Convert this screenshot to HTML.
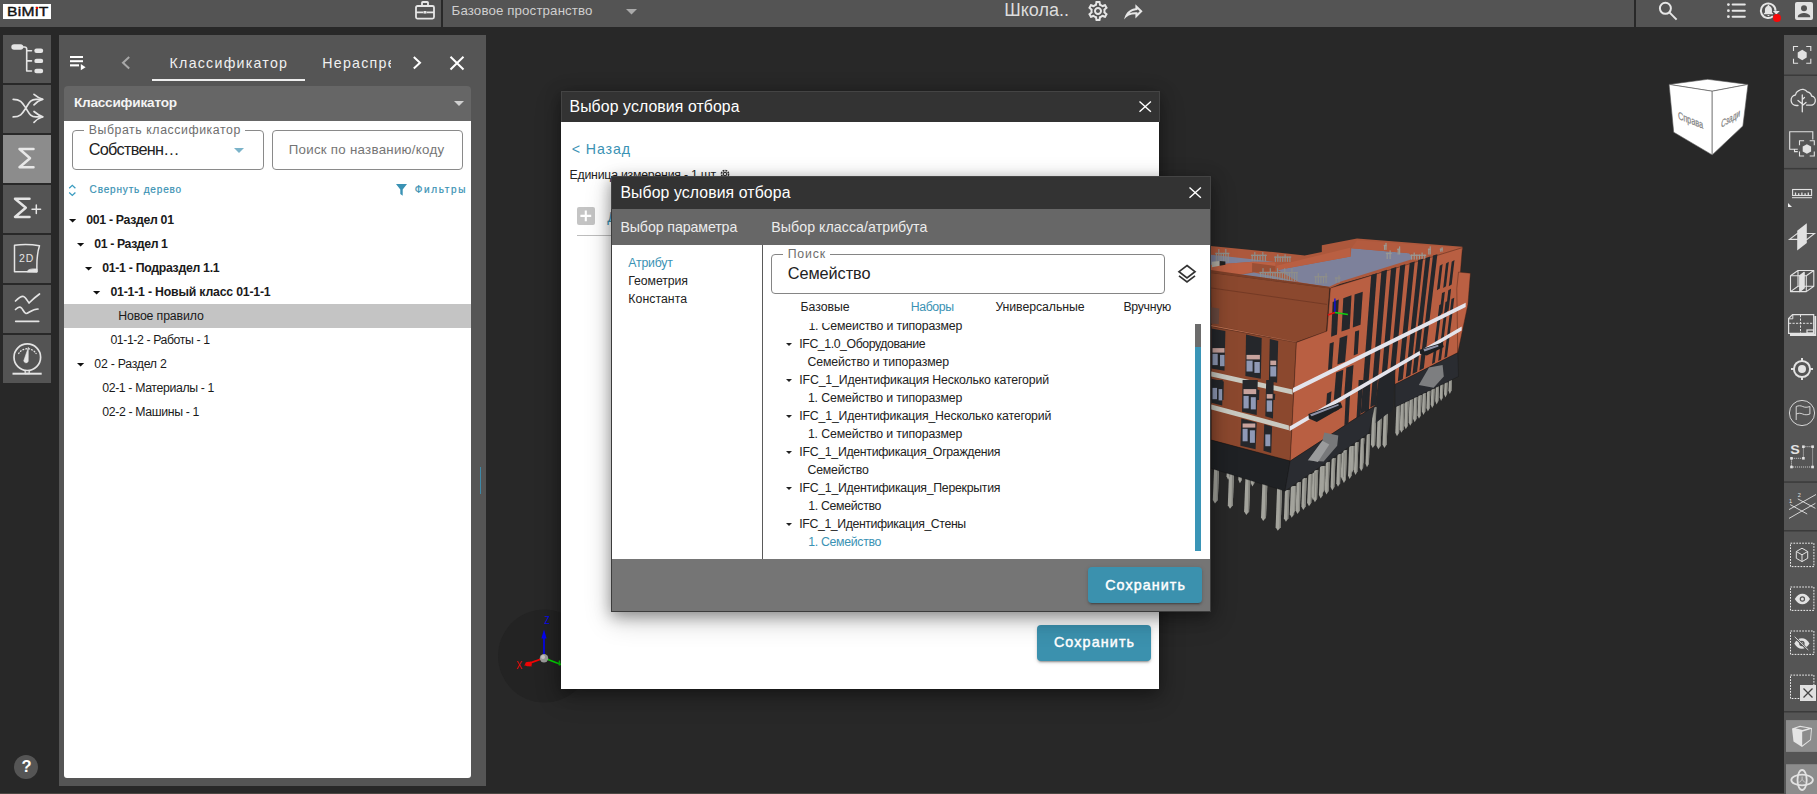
<!DOCTYPE html>
<html lang="ru">
<head>
<meta charset="utf-8">
<title>BIMIT</title>
<style>
*{box-sizing:border-box;margin:0;padding:0}
html,body{width:1817px;height:794px;overflow:hidden;background:#282828;font-family:"Liberation Sans",sans-serif;color:#222}
.abs{position:absolute}
#app{position:relative;width:1817px;height:794px;overflow:hidden;background:#282828}
.t{position:absolute;white-space:nowrap;line-height:1}
svg{position:absolute;overflow:visible}
#top{left:0;top:0;width:1817px;height:27px;background:#545454}
#logo{left:3px;top:4px;width:48px;height:15px;background:#fff}
.lb{position:absolute;left:3px;width:48px;height:48px;background:#545454}
.lb.sel{background:#8c8c8c}
#panel{left:59px;top:35px;width:427px;height:750.700px;background:#555}
#sect{left:64px;top:86px;width:407px;height:35px;background:#666;border-radius:4px 4px 0 0}
#pbody{left:64px;top:120.500px;width:407px;height:657.500px;background:#fff;border-radius:0 0 3px 3px}
.box{position:absolute;border:1px solid #8a8a8a;border-radius:4px;background:#fff}
.rb{position:absolute;left:1784px;width:33px;background:#555}
.mhead{position:absolute;background:#333}
.btn{position:absolute;background:#3b91ae;border-radius:4px;box-shadow:0 3px 1px -2px rgba(0,0,0,.2),0 2px 2px 0 rgba(0,0,0,.14),0 1px 5px 0 rgba(0,0,0,.12)}
</style>
</head>
<body>
<div id="app">
<svg style="left:0;top:0" width="1817" height="794" viewBox="0 0 1817 794">
<circle cx="544.500" cy="656" r="46.500" fill="#232323"/><path d="M544 658V636" stroke="#0404f0" stroke-width="1.700"/><path d="M541.400 638.500L544 629.300 546.600 638.500z" fill="#0404f0"/><path d="M544 658L529 663.300" stroke="#f00404" stroke-width="1.800"/><path d="M530.500 661.300L523.800 665.200 531.700 666.500z" fill="#f00404"/><ellipse cx="528.500" cy="664" rx="3.300" ry="2.300" fill="#f00404"/><path d="M544 658L561 664.500" stroke="#04d804" stroke-width="1.700"/><path d="M559.500 660.500v5" stroke="#04d804" stroke-width="1.600"/><circle cx="544" cy="658.200" r="4.200" fill="#9a9a9a"/><circle cx="543" cy="657" r="2" fill="#c4c4c4"/><text transform="translate(544.600 623.700) scale(0.800 1)" font-family="Liberation Sans, sans-serif" font-size="10.500" fill="#0808f4">Z</text><text transform="translate(516.200 668.700) scale(0.850 1)" font-family="Liberation Sans, sans-serif" font-size="10.500" fill="#f40808">X</text>
<g><path d="M1214.1 468.3h5.0L1217.8 500.1l-2.8 3.500l-2.2-3.500z" fill="#a3a39c"/><path d="M1217.1 468.3h2.0L1217.8 500.1l-1.2 1.500z" fill="#83837d"/><path d="M1229.0 472.9h5.0L1232.8 505.3l-2.8 3.500l-2.2-3.500z" fill="#a3a39c"/><path d="M1232.0 472.9h2.0L1232.8 505.3l-1.2 1.500z" fill="#83837d"/><path d="M1245.4 477.9h5.0L1249.1 511.4l-2.8 3.500l-2.2-3.500z" fill="#a3a39c"/><path d="M1248.4 477.9h2.0L1249.1 511.4l-1.2 1.500z" fill="#83837d"/><path d="M1262.4 483.1h5.0L1266.0 517.5l-2.8 3.500l-2.2-3.500z" fill="#a3a39c"/><path d="M1265.4 483.1h2.0L1266.0 517.5l-1.2 1.500z" fill="#83837d"/><path d="M1277.1 487.6h5.0L1280.6 527.3l-2.8 3.500l-2.2-3.500z" fill="#a3a39c"/><path d="M1280.1 487.6h2.0L1280.6 527.3l-1.2 1.500z" fill="#83837d"/><path d="M1226.8 472.2h3.6L1230.1 476.3l-2.0 3.500l-1.6-3.500z" fill="#a3a39c"/><path d="M1228.9 472.2h1.4L1230.1 476.3l-0.9 1.500z" fill="#83837d"/><path d="M1238.5 475.8h3.6L1241.9 479.7l-2.0 3.500l-1.6-3.500z" fill="#a3a39c"/><path d="M1240.7 475.8h1.4L1241.9 479.7l-0.9 1.500z" fill="#83837d"/><path d="M1251.0 479.6h3.6L1254.4 483.1l-2.0 3.500l-1.6-3.500z" fill="#a3a39c"/><path d="M1253.2 479.6h1.4L1254.4 483.1l-0.9 1.500z" fill="#83837d"/><path d="M1285.0 490.0h4.4L1288.3 518.2l-2.4 3.500l-2.0-3.500z" fill="#a3a39c"/><path d="M1287.7 490.0h1.8L1288.3 518.2l-1.1 1.500z" fill="#83837d"/><path d="M1290.9 486.0h4.3L1294.1 514.3l-2.4 3.500l-1.9-3.500z" fill="#a3a39c"/><path d="M1293.5 486.0h1.7L1294.1 514.3l-1.1 1.500z" fill="#83837d"/><path d="M1296.7 482.0h4.3L1299.8 510.4l-2.3 3.500l-1.9-3.500z" fill="#a3a39c"/><path d="M1299.3 482.0h1.7L1299.8 510.4l-1.1 1.500z" fill="#83837d"/><path d="M1302.5 478.0h4.2L1305.6 506.6l-2.3 3.500l-1.9-3.500z" fill="#a3a39c"/><path d="M1305.0 478.0h1.7L1305.6 506.6l-1.0 1.500z" fill="#83837d"/><path d="M1308.4 474.0h4.1L1311.3 502.7l-2.3 3.500l-1.9-3.500z" fill="#a3a39c"/><path d="M1310.8 474.0h1.6L1311.3 502.7l-1.0 1.500z" fill="#83837d"/><path d="M1314.2 469.9h4.0L1317.1 498.8l-2.2 3.500l-1.8-3.500z" fill="#a3a39c"/><path d="M1316.6 469.9h1.6L1317.1 498.8l-1.0 1.500z" fill="#83837d"/><path d="M1320.0 465.9h4.0L1322.9 494.9l-2.2 3.500l-1.8-3.500z" fill="#a3a39c"/><path d="M1322.4 465.9h1.6L1322.9 494.9l-1.0 1.500z" fill="#83837d"/><path d="M1325.9 461.9h3.9L1328.6 491.0l-2.1 3.500l-1.8-3.500z" fill="#a3a39c"/><path d="M1328.2 461.9h1.6L1328.6 491.0l-1.0 1.500z" fill="#83837d"/><path d="M1331.7 457.9h3.8L1334.4 487.1l-2.1 3.500l-1.7-3.500z" fill="#a3a39c"/><path d="M1334.0 457.9h1.5L1334.4 487.1l-1.0 1.500z" fill="#83837d"/><path d="M1337.5 453.9h3.8L1340.1 483.2l-2.1 3.500l-1.7-3.500z" fill="#a3a39c"/><path d="M1339.8 453.9h1.5L1340.1 483.2l-0.9 1.500z" fill="#83837d"/><path d="M1343.3 449.9h3.7L1345.9 479.4l-2.0 3.500l-1.7-3.500z" fill="#a3a39c"/><path d="M1345.6 449.9h1.5L1345.9 479.4l-0.9 1.500z" fill="#83837d"/><path d="M1349.2 445.9h3.6L1351.6 475.5l-2.0 3.500l-1.6-3.500z" fill="#a3a39c"/><path d="M1351.3 445.9h1.4L1351.6 475.5l-0.9 1.500z" fill="#83837d"/><path d="M1355.0 441.9h3.5L1357.4 471.6l-1.9 3.500l-1.6-3.500z" fill="#a3a39c"/><path d="M1357.1 441.9h1.4L1357.4 471.6l-0.9 1.500z" fill="#83837d"/><path d="M1360.8 437.9h3.5L1363.1 467.7l-1.9 3.500l-1.6-3.500z" fill="#a3a39c"/><path d="M1362.9 437.9h1.4L1363.1 467.7l-0.9 1.500z" fill="#83837d"/><path d="M1366.7 433.9h3.4L1368.9 463.8l-1.9 3.500l-1.5-3.500z" fill="#a3a39c"/><path d="M1368.7 433.9h1.4L1368.9 463.8l-0.9 1.500z" fill="#83837d"/><path d="M1293.2 486.1h3.0L1295.2 510.3l-1.7 3.500l-1.4-3.500z" fill="#a3a39c"/><path d="M1295.0 486.1h1.2L1295.2 510.3l-0.8 1.500z" fill="#83837d"/><path d="M1302.9 479.4h3.0L1305.0 503.5l-1.7 3.500l-1.4-3.500z" fill="#a3a39c"/><path d="M1304.7 479.4h1.2L1305.0 503.5l-0.8 1.500z" fill="#83837d"/><path d="M1312.6 472.7h3.0L1314.7 496.7l-1.7 3.500l-1.4-3.500z" fill="#a3a39c"/><path d="M1314.4 472.7h1.2L1314.7 496.7l-0.8 1.500z" fill="#83837d"/><path d="M1322.4 466.1h3.0L1324.4 489.9l-1.7 3.500l-1.4-3.500z" fill="#a3a39c"/><path d="M1324.2 466.1h1.2L1324.4 489.9l-0.8 1.500z" fill="#83837d"/><path d="M1332.1 459.4h3.0L1334.1 483.1l-1.7 3.500l-1.4-3.500z" fill="#a3a39c"/><path d="M1333.9 459.4h1.2L1334.1 483.1l-0.8 1.500z" fill="#83837d"/><path d="M1341.8 452.7h3.0L1343.8 476.3l-1.7 3.500l-1.4-3.500z" fill="#a3a39c"/><path d="M1343.6 452.7h1.2L1343.8 476.3l-0.8 1.500z" fill="#83837d"/><path d="M1351.5 446.0h3.0L1353.6 469.5l-1.7 3.500l-1.4-3.500z" fill="#a3a39c"/><path d="M1353.3 446.0h1.2L1353.6 469.5l-0.8 1.500z" fill="#83837d"/><path d="M1361.2 439.3h3.0L1363.3 462.7l-1.7 3.500l-1.4-3.500z" fill="#a3a39c"/><path d="M1363.0 439.3h1.2L1363.3 462.7l-0.8 1.500z" fill="#83837d"/><path d="M1372.3 407.2h4.2L1375.1 444.5l-2.3 3.500l-1.9-3.500z" fill="#a3a39c"/><path d="M1374.9 407.2h1.7L1375.1 444.5l-1.1 1.500z" fill="#83837d"/><path d="M1378.0 404.9h4.2L1380.7 445.7l-2.3 3.500l-1.9-3.500z" fill="#a3a39c"/><path d="M1380.5 404.9h1.7L1380.7 445.7l-1.1 1.500z" fill="#83837d"/><path d="M1384.1 402.7h4.2L1386.7 444.5l-2.3 3.500l-1.9-3.500z" fill="#a3a39c"/><path d="M1386.6 402.7h1.7L1386.7 444.5l-1.1 1.500z" fill="#83837d"/><path d="M1396.4 405.5h3.8L1399.1 432.7l-2.1 3.500l-1.7-3.500z" fill="#a3a39c"/><path d="M1398.7 405.5h1.5L1399.1 432.7l-0.9 1.500z" fill="#83837d"/><path d="M1400.8 403.4h3.7L1403.5 429.2l-2.1 3.500l-1.7-3.500z" fill="#a3a39c"/><path d="M1403.0 403.4h1.5L1403.5 429.2l-0.9 1.500z" fill="#83837d"/><path d="M1405.1 401.3h3.7L1407.8 425.7l-2.0 3.500l-1.6-3.500z" fill="#a3a39c"/><path d="M1407.3 401.3h1.5L1407.8 425.7l-0.9 1.500z" fill="#83837d"/><path d="M1409.5 399.2h3.6L1412.2 422.2l-2.0 3.500l-1.6-3.500z" fill="#a3a39c"/><path d="M1411.7 399.2h1.4L1412.2 422.2l-0.9 1.500z" fill="#83837d"/><path d="M1413.9 397.1h3.5L1416.6 418.7l-1.9 3.500l-1.6-3.500z" fill="#a3a39c"/><path d="M1416.0 397.1h1.4L1416.6 418.7l-0.9 1.500z" fill="#83837d"/><path d="M1418.3 395.0h3.5L1420.9 415.2l-1.9 3.500l-1.6-3.500z" fill="#a3a39c"/><path d="M1420.4 395.0h1.4L1420.9 415.2l-0.9 1.500z" fill="#83837d"/><path d="M1422.7 392.9h3.4L1425.3 411.6l-1.9 3.500l-1.5-3.500z" fill="#a3a39c"/><path d="M1424.7 392.9h1.4L1425.3 411.6l-0.8 1.500z" fill="#83837d"/><path d="M1427.1 390.8h3.3L1429.7 408.1l-1.8 3.500l-1.5-3.500z" fill="#a3a39c"/><path d="M1429.1 390.8h1.3L1429.7 408.1l-0.8 1.500z" fill="#83837d"/><path d="M1431.4 388.7h3.3L1434.0 404.6l-1.8 3.500l-1.5-3.500z" fill="#a3a39c"/><path d="M1433.4 388.7h1.3L1434.0 404.6l-0.8 1.500z" fill="#83837d"/><path d="M1435.8 386.6h3.2L1438.4 401.1l-1.8 3.500l-1.4-3.500z" fill="#a3a39c"/><path d="M1437.7 386.6h1.3L1438.4 401.1l-0.8 1.500z" fill="#83837d"/><path d="M1440.2 384.5h3.1L1442.8 397.6l-1.7 3.500l-1.4-3.500z" fill="#a3a39c"/><path d="M1442.1 384.5h1.3L1442.8 397.6l-0.8 1.500z" fill="#83837d"/><path d="M1444.6 382.4h3.1L1447.1 394.1l-1.7 3.500l-1.4-3.500z" fill="#a3a39c"/><path d="M1446.4 382.4h1.2L1447.1 394.1l-0.8 1.500z" fill="#83837d"/><path d="M1449.0 380.3h3.0L1451.5 390.6l-1.7 3.500l-1.4-3.500z" fill="#a3a39c"/><path d="M1450.8 380.3h1.2L1451.5 390.6l-0.8 1.500z" fill="#83837d"/></g>
<g><polygon points="1210.7,246.0 1273.0,252.0 1304.8,255.4 1321.8,252.0 1321.8,245.2 1357.0,238.4 1462.4,246.8 1462.4,249.4 1340.0,284.0 1329.7,288.5 1210.7,272.6" fill="#ad583c"/>
<polygon points="1210.7,254.7 1232.2,257.0 1274.2,261.7 1252.6,261.7 1210.7,264.9" fill="#7d819b"/>
<polygon points="1210.7,264.9 1252.6,261.7 1275.3,262.4 1275.3,266.4 1239.0,274.9 1210.7,270.4" fill="#bb6043"/>
<polygon points="1252.1,263.0 1275.3,266.0 1275.3,270.4 1252.1,272.6" fill="#9a4f35"/>
<polygon points="1239.0,274.9 1253.8,272.4 1275.3,276.6 1299.1,282.3 1268.5,278.3" fill="#7d819b"/>
<polygon points="1277.6,270.1 1350.7,256.5 1351.3,248.2 1409.2,253.3 1412.6,259.0 1340.0,281.7 1328.6,287.1 1299.1,282.3" fill="#7d819b"/>
<polygon points="1276.4,265.8 1350.1,247.7 1350.7,256.5 1277.6,270.1" fill="#b95f42"/>
<polygon points="1357.0,240.3 1460.2,247.7 1437.5,255.0 1409.2,253.3 1351.3,248.2" fill="#b35b3f"/>
<rect x="1215.2" y="252.8" width="14.2" height="1.300" fill="#8e8e8a"/><rect x="1215.8" y="252.8" width="1.200" height="9.6" fill="#8e8e8a"/><rect x="1218.2" y="249.0" width="1.200" height="13.5" fill="#8e8e8a"/><rect x="1220.5" y="252.8" width="1.200" height="9.6" fill="#8e8e8a"/><rect x="1222.9" y="252.8" width="1.200" height="9.6" fill="#8e8e8a"/><rect x="1225.2" y="249.0" width="1.200" height="13.5" fill="#8e8e8a"/><rect x="1227.6" y="252.8" width="1.200" height="9.6" fill="#8e8e8a"/>
<rect x="1250.9" y="254.7" width="15.9" height="1.300" fill="#8e8e8a"/><rect x="1251.6" y="254.7" width="1.200" height="6.6" fill="#8e8e8a"/><rect x="1254.2" y="252.1" width="1.200" height="9.2" fill="#8e8e8a"/><rect x="1256.9" y="254.7" width="1.200" height="6.6" fill="#8e8e8a"/><rect x="1259.5" y="254.7" width="1.200" height="6.6" fill="#8e8e8a"/><rect x="1262.2" y="252.1" width="1.200" height="9.2" fill="#8e8e8a"/><rect x="1264.8" y="254.7" width="1.200" height="6.6" fill="#8e8e8a"/>
<rect x="1274.2" y="256.5" width="17.0" height="1.300" fill="#8e8e8a"/><rect x="1274.8" y="256.5" width="1.200" height="5.4" fill="#8e8e8a"/><rect x="1277.2" y="254.3" width="1.200" height="7.5" fill="#8e8e8a"/><rect x="1279.6" y="256.5" width="1.200" height="5.4" fill="#8e8e8a"/><rect x="1282.1" y="256.5" width="1.200" height="5.4" fill="#8e8e8a"/><rect x="1284.5" y="254.3" width="1.200" height="7.5" fill="#8e8e8a"/><rect x="1286.9" y="256.5" width="1.200" height="5.4" fill="#8e8e8a"/><rect x="1289.3" y="256.5" width="1.200" height="5.4" fill="#8e8e8a"/>
<rect x="1259.4" y="271.9" width="38.5" height="1.300" fill="#8e8e8a"/><rect x="1260.0" y="271.9" width="1.200" height="9.3" fill="#8e8e8a"/><rect x="1262.4" y="268.2" width="1.200" height="12.9" fill="#8e8e8a"/><rect x="1264.8" y="271.9" width="1.200" height="9.3" fill="#8e8e8a"/><rect x="1267.3" y="271.9" width="1.200" height="9.3" fill="#8e8e8a"/><rect x="1269.7" y="268.2" width="1.200" height="12.9" fill="#8e8e8a"/><rect x="1272.1" y="271.9" width="1.200" height="9.3" fill="#8e8e8a"/><rect x="1274.5" y="271.9" width="1.200" height="9.3" fill="#8e8e8a"/><rect x="1276.9" y="268.2" width="1.200" height="12.9" fill="#8e8e8a"/><rect x="1279.3" y="271.9" width="1.200" height="9.3" fill="#8e8e8a"/><rect x="1281.7" y="271.9" width="1.200" height="9.3" fill="#8e8e8a"/><rect x="1284.1" y="268.2" width="1.200" height="12.9" fill="#8e8e8a"/><rect x="1286.5" y="271.9" width="1.200" height="9.3" fill="#8e8e8a"/><rect x="1288.9" y="271.9" width="1.200" height="9.3" fill="#8e8e8a"/><rect x="1291.3" y="268.2" width="1.200" height="12.9" fill="#8e8e8a"/><rect x="1293.8" y="271.9" width="1.200" height="9.3" fill="#8e8e8a"/><rect x="1296.2" y="271.9" width="1.200" height="9.3" fill="#8e8e8a"/>
<rect x="1314.4" y="276.1" width="13.0" height="1.300" fill="#8e8e8a"/><rect x="1315.1" y="276.1" width="1.200" height="7.3" fill="#8e8e8a"/><rect x="1317.7" y="273.2" width="1.200" height="10.2" fill="#8e8e8a"/><rect x="1320.3" y="276.1" width="1.200" height="7.3" fill="#8e8e8a"/><rect x="1322.9" y="276.1" width="1.200" height="7.3" fill="#8e8e8a"/><rect x="1325.5" y="273.2" width="1.200" height="10.2" fill="#8e8e8a"/>
<rect x="1334.8" y="277.4" width="5.7" height="1.300" fill="#8e8e8a"/><rect x="1335.5" y="277.4" width="1.200" height="5.4" fill="#8e8e8a"/><rect x="1338.4" y="275.3" width="1.200" height="7.5" fill="#8e8e8a"/>
<polygon points="1211.8,261.8 1219.7,261.1 1219.7,265.8 1211.8,267.2" fill="#b4b0a6"/>
<polygon points="1219.7,261.1 1225.4,261.5 1225.4,264.7 1219.7,265.8" fill="#222"/>
<rect x="1383.7" y="244.9" width="2.8" height="1.300" fill="#9a9a94"/><rect x="1384.0" y="244.9" width="1.200" height="5.0" fill="#9a9a94"/><rect x="1385.4" y="242.9" width="1.200" height="7.0" fill="#9a9a94"/>
<rect x="1385.9" y="252.8" width="5.7" height="1.300" fill="#9a9a94"/><rect x="1386.6" y="252.8" width="1.200" height="6.2" fill="#9a9a94"/><rect x="1389.5" y="250.4" width="1.200" height="8.6" fill="#9a9a94"/>
<rect x="1397.3" y="248.7" width="2.8" height="1.300" fill="#9a9a94"/><rect x="1397.6" y="248.7" width="1.200" height="5.8" fill="#9a9a94"/><rect x="1399.0" y="246.4" width="1.200" height="8.1" fill="#9a9a94"/>
<rect x="1410.3" y="254.6" width="15.9" height="1.300" fill="#9a9a94"/><rect x="1411.0" y="254.6" width="1.200" height="5.0" fill="#9a9a94"/><rect x="1413.6" y="252.6" width="1.200" height="7.0" fill="#9a9a94"/><rect x="1416.2" y="254.6" width="1.200" height="5.0" fill="#9a9a94"/><rect x="1418.9" y="254.6" width="1.200" height="5.0" fill="#9a9a94"/><rect x="1421.5" y="252.6" width="1.200" height="7.0" fill="#9a9a94"/><rect x="1424.2" y="254.6" width="1.200" height="5.0" fill="#9a9a94"/>
<rect x="1427.9" y="248.7" width="2.8" height="1.300" fill="#9a9a94"/><rect x="1428.2" y="248.7" width="1.200" height="5.8" fill="#9a9a94"/><rect x="1429.6" y="246.4" width="1.200" height="8.1" fill="#9a9a94"/>
<rect x="1439.8" y="248.6" width="2.8" height="1.300" fill="#9a9a94"/><rect x="1440.1" y="248.6" width="1.200" height="3.1" fill="#9a9a94"/><rect x="1441.5" y="247.3" width="1.200" height="4.3" fill="#9a9a94"/>
<polygon points="1210.7,272.6 1329.7,287.9 1326.3,331.6 1296.4,342.2 1211.3,325.2" fill="#8b482e" stroke="#3c1d12" stroke-width="0.4"/>
<path d="M1210.7 287.9L1326.9 304.4" stroke="#5e2d1c" stroke-width="0.5" fill="none"/>
<polygon points="1210.7,270.1 1329.1,286.8 1329.7,288.5 1210.7,272.8" fill="#7c3f28"/>
<polygon points="1211.3,325.0 1296.4,341.8 1296.4,342.9 1211.3,326.8" fill="#c07050"/>
<polygon points="1211.3,326.6 1296.4,342.4 1290.2,461.0 1211.3,440.1" fill="#8b482e" stroke="#3c1d12" stroke-width="0.4"/>
<polygon points="1330.4,288.0 1462.4,247.7 1460.2,274.9 1457.8,352.7 1395.0,384.4 1395.0,369.7 1379.1,376.5 1374.6,406.1 1290.2,461.0 1296.4,342.4 1327.0,331.1" fill="#b95f42" stroke="#3c1d12" stroke-width="0.4"/>
<polygon points="1458.5,272.1 1470.4,273.2 1467.9,304.4 1457.8,352.7 1456.8,288.5" fill="#bb6043" stroke="#3c1d12" stroke-width="0.4"/>
<polygon points="1371.2,274.9 1376.9,273.2 1366.4,410.8 1360.7,413.7" fill="#25272b"/>
<polygon points="1381.4,271.5 1387.0,269.8 1375.9,404.6 1370.3,407.4" fill="#25272b"/>
<polygon points="1391.0,268.7 1396.4,267.1 1383.1,417.6 1377.7,420.3" fill="#25272b"/>
<polygon points="1400.1,265.8 1405.3,264.2 1391.4,411.7 1386.2,414.3" fill="#25272b"/>
<polygon points="1409.7,263.0 1414.7,261.5 1402.8,379.0 1397.8,381.5" fill="#25272b"/>
<polygon points="1418.2,260.1 1423.0,258.7 1410.5,375.1 1405.7,377.5" fill="#25272b"/>
<polygon points="1425.6,257.9 1430.2,256.5 1417.1,371.7 1412.5,374.0" fill="#25272b"/>
<polygon points="1433.0,255.6 1437.4,254.3 1423.8,368.3 1419.4,370.5" fill="#25272b"/>
<polygon points="1439.3,305.0 1442.2,303.7 1434.9,362.6 1432.0,364.1" fill="#25272b"/>
<polygon points="1445.5,302.0 1448.4,300.7 1441.1,359.5 1438.2,360.9" fill="#25272b"/>
<polygon points="1451.5,299.0 1454.3,297.7 1447.1,356.5 1444.3,357.9" fill="#25272b"/>
<polygon points="1332.7,302.1 1338.8,299.4 1337.0,334.5 1331.1,336.8" fill="#25272b"/>
<polygon points="1343.3,298.2 1351.5,295.3 1349.7,328.8 1341.5,331.6" fill="#25272b"/>
<polygon points="1354.6,294.4 1362.8,291.7 1360.5,324.8 1352.8,327.5" fill="#25272b"/>
<polygon points="1329.7,343.6 1333.8,342.0 1332.0,368.5 1328.1,370.1" fill="#25272b"/>
<polygon points="1339.7,337.9 1347.4,335.2 1345.1,361.7 1337.4,364.4" fill="#25272b"/>
<polygon points="1355.1,331.6 1359.2,330.2 1357.8,353.8 1353.7,355.4" fill="#25272b"/>
<polygon points="1439.8,265.8 1442.6,264.1 1439.8,288.5 1436.9,290.2" fill="#25272b"/>
<polygon points="1446.0,263.5 1448.8,261.8 1446.0,286.2 1443.2,287.9" fill="#25272b"/>
<polygon points="1451.7,261.8 1454.5,260.1 1451.7,284.5 1448.8,286.2" fill="#25272b"/>
<polygon points="1442.0,293.0 1444.9,291.7 1442.4,313.2 1439.5,314.6" fill="#25272b"/>
<polygon points="1448.3,290.2 1451.1,288.8 1448.6,310.4 1445.8,311.7" fill="#25272b"/>
<polygon points="1336.1,372.4 1343.3,369.7 1341.0,397.3 1333.8,400.0" fill="#25272b"/>
<polygon points="1346.3,367.8 1353.5,365.1 1351.5,392.8 1344.2,395.5" fill="#25272b"/>
<polygon points="1327.0,393.6 1331.5,391.3 1329.7,414.0 1325.4,416.3" fill="#25272b"/>
<polygon points="1336.1,389.1 1340.1,387.3 1338.8,409.5 1334.7,411.7" fill="#25272b"/>
<polygon points="1346.3,383.4 1350.8,381.1 1348.5,423.1 1344.4,425.4" fill="#25272b"/>
<polygon points="1358.7,380.0 1363.3,380.0 1360.5,416.3 1356.5,418.5" fill="#25272b"/>
<polygon points="1366.7,380.0 1370.5,380.0 1368.9,411.7 1365.1,414.0" fill="#25272b"/>
<polygon points="1379.1,376.5 1395.0,369.7 1392.7,409.5 1375.7,423.1" fill="#24262a"/>
<polygon points="1211.3,440.1 1290.2,461.0 1285.0,491.1 1211.3,468.4" fill="#1f2124" stroke="#111" stroke-width="0.3"/>
<polygon points="1290.2,461.0 1374.6,406.1 1368.9,433.3 1285.0,491.1" fill="#2a2c31" stroke="#111" stroke-width="0.3"/>
<polygon points="1395.0,384.4 1457.8,352.7 1458.5,376.5 1395.0,407.2" fill="#2a2c31" stroke="#111" stroke-width="0.3"/>
<polygon points="1293.0,388.1 1465.7,302.8 1465.7,307.0 1293.0,392.7" fill="#e4e4ec"/>
<polygon points="1289.6,426.5 1461.7,326.6 1461.7,330.4 1289.6,430.9" fill="#e4e4ec"/>
<polygon points="1308.4,414.0 1340.6,402.2 1342.4,407.2 1316.8,422.0 1308.8,418.5" fill="#1e2023"/>
<polygon points="1310.0,414.5 1338.3,404.0 1338.8,405.4 1311.6,416.3" fill="#8f93a8"/>
<polygon points="1419.5,349.7 1442.6,342.4 1443.8,347.0 1426.8,355.6 1420.0,353.8" fill="#1e2023"/>
<polygon points="1423.4,349.3 1438.1,344.7 1438.5,346.5 1424.5,351.5" fill="#8f93a8"/>
<polygon points="1324.3,432.6 1338.3,435.6 1337.2,445.8 1323.6,461.6 1307.7,460.5 1322.4,440.8" fill="#77787a"/>
<polygon points="1322.4,440.8 1329.3,444.6 1317.9,462.1 1308.4,459.8" fill="#9a9b9c"/>
<polygon points="1429.0,367.4 1442.6,365.1 1443.8,376.5 1433.6,387.8 1418.8,385.1" fill="#7d7e80"/>
<polygon points="1211.3,371.5 1292.5,389.6 1292.5,394.6 1211.3,376.5" fill="#c9c9c0"/>
<polygon points="1211.3,404.5 1288.9,425.4 1288.9,430.3 1211.3,409.5" fill="#c9c9c0"/>
<polygon points="1211.3,328.4 1225.4,331.1 1224.5,370.8 1211.3,368.5" fill="#25272b"/>
<polygon points="1246.0,334.5 1261.7,337.9 1260.8,378.7 1245.4,376.0" fill="#25272b"/>
<polygon points="1269.8,339.0 1278.2,340.9 1277.1,382.8 1268.9,381.0" fill="#25272b"/>
<polygon points="1211.3,378.7 1223.8,381.5 1223.4,400.0 1211.3,400.0" fill="#25272b"/>
<polygon points="1244.2,386.7 1259.4,390.1 1259.0,400.0 1243.8,400.0" fill="#25272b"/>
<polygon points="1267.6,392.3 1275.3,394.1 1274.8,400.0 1267.1,400.0" fill="#25272b"/>
<polygon points="1211.3,380.0 1222.7,380.0 1222.2,405.4 1211.3,402.7" fill="#25272b"/>
<polygon points="1242.6,380.0 1257.8,380.0 1256.7,415.1 1242.0,411.7" fill="#25272b"/>
<polygon points="1266.2,380.0 1273.7,380.0 1273.0,418.5 1265.3,416.3" fill="#25272b"/>
<polygon points="1241.3,418.5 1256.7,422.6 1255.6,449.2 1240.4,445.8" fill="#25272b"/>
<polygon points="1264.2,424.2 1272.1,426.5 1271.2,453.0 1263.5,450.7" fill="#25272b"/>
<rect x="1212.5" y="353.8" width="5.2" height="11.3" fill="#8f99b5"/>
<rect x="1220.0" y="354.9" width="4.5" height="11.3" fill="#8f99b5"/>
<rect x="1246.5" y="360.6" width="6.1" height="10.9" fill="#8f99b5"/>
<rect x="1254.4" y="362.0" width="5.4" height="10.9" fill="#8f99b5"/>
<rect x="1270.3" y="366.3" width="5.9" height="10.2" fill="#8f99b5"/>
<rect x="1212.5" y="348.1" width="12.0" height="4.5" fill="#c8a39d"/>
<rect x="1246.5" y="354.9" width="13.4" height="4.5" fill="#c8a39d"/>
<rect x="1270.3" y="360.6" width="5.9" height="4.5" fill="#c8a39d"/>
<rect x="1212.5" y="387.9" width="4.5" height="11.3" fill="#8f99b5"/>
<rect x="1218.6" y="389.1" width="3.6" height="11.3" fill="#8f99b5"/>
<rect x="1243.5" y="395.9" width="5.2" height="12.5" fill="#8f99b5"/>
<rect x="1250.8" y="397.2" width="5.0" height="12.2" fill="#8f99b5"/>
<rect x="1266.7" y="400.4" width="5.4" height="11.3" fill="#8f99b5"/>
<rect x="1242.6" y="428.8" width="5.0" height="12.5" fill="#8f99b5"/>
<rect x="1249.9" y="430.3" width="5.0" height="12.5" fill="#8f99b5"/>
<rect x="1265.3" y="434.4" width="5.0" height="11.8" fill="#8f99b5"/>
<rect x="1243.5" y="389.1" width="12.7" height="5.0" fill="#c8a39d"/>
<rect x="1266.7" y="394.1" width="5.9" height="4.5" fill="#c8a39d"/>
<rect x="1242.6" y="423.5" width="12.7" height="4.1" fill="#c8a39d"/>
<polygon points="1211.3,307.3 1219.3,308.4 1218.8,324.3 1211.3,323.4" fill="#6b4a40"/></g>
<path d="M1334.9 312.5V298.5" stroke="#1010e0" stroke-width="1.400"/><path d="M1334.9 312.5L1347.9 314.5" stroke="#10d010" stroke-width="1.400"/><path d="M1334.9 312.5L1327.9 315.0" stroke="#e01010" stroke-width="1.400"/>
<polygon points="1669.1,84.4 1707.7,79.3 1748.0,84.4 1712.2,91.2" fill="#fff" stroke="#555" stroke-width="0.6"/><polygon points="1669.1,84.4 1712.2,91.2 1712.2,154.9 1673.7,132.2" fill="#fff" stroke="#555" stroke-width="0.6"/><polygon points="1712.2,91.2 1748.0,84.4 1742.9,125.9 1712.2,154.9" fill="#fff" stroke="#555" stroke-width="0.6"/><text transform="matrix(0.660 0.260 0.060 1 1678.2 118.9)" font-family="Liberation Sans, sans-serif" font-size="11" fill="#808080" stroke="#808080" stroke-width="0.250">Справа</text><text transform="matrix(0.600 -0.370 -0.050 1 1721.0 128.0)" font-family="Liberation Sans, sans-serif" font-size="11" fill="#808080" stroke="#808080" stroke-width="0.250">Сзади</text>
</svg>

<div id="top" class="abs">
<div id="logo" class="abs"></div>
<div class="t" style="left:7.1px;top:5.7px;font-size:12px;color:#111;letter-spacing:0.26px;transform:scaleX(1.3);transform-origin:0 0;-webkit-text-stroke:0.350px #111;">BiMiT</div>
<div class="abs" style="left:36.300px;top:7px;width:2px;height:2px;background:#e00"></div>
<svg style="left:415px;top:1px" width="20" height="19" viewBox="0 0 20 19" fill="none" stroke="#e6e6e6" stroke-width="1.800">
<rect x="1" y="5" width="18" height="12.600" rx="1.500"/><path d="M7 5V1.800a.8 .8 0 0 1 .8-.8h4.400a.8 .8 0 0 1 .8 .8V5M1 11.300h7.400M11.600 11.300H19"/><rect x="8.600" y="10" width="2.800" height="2.600" fill="#e6e6e6" stroke="none"/>
</svg>
<div class="abs" style="left:441px;top:0;width:2px;height:27px;background:#282828"></div>
<div class="t" style="left:451.6px;top:3.9px;font-size:13.3px;color:#cfcfcf;letter-spacing:0.12px;">Базовое пространство</div>
<svg style="left:626px;top:9px" width="11" height="6" viewBox="0 0 11 6"><path d="M0 0h11L5.500 5.600z" fill="#aaa"/></svg>
<div class="t" style="left:1004.3px;top:1.4px;font-size:18px;color:#ddd;">Школа..</div>
<svg style="left:1085.700px;top:-0.800px" width="24" height="24" viewBox="0 0 24 24" fill="#e6e6e6"><path d="M19.430 12.980c.04-.32.070-.64.070-.98 0-.34-.03-.66-.07-.98l2.110-1.650c.19-.15.240-.42.120-.64l-2-3.460a.5 .5 0 0 0-.61-.22l-2.490 1c-.52-.4-1.080-.73-1.690-.98l-.38-2.650A.488 .488 0 0 0 14 2h-4c-.25 0-.46.180-.49.420l-.38 2.650c-.61.250-1.170.590-1.690.980l-2.490-1a.566 .566 0 0 0-.18-.03c-.17 0-.34.090-.43.250l-2 3.460c-.13.220-.07.490.12.640l2.110 1.650c-.04.320-.07.650-.07.980 0 .33.030.66.070.98l-2.110 1.650c-.19.150-.24.420-.12.640l2 3.460a.5 .5 0 0 0 .61.220l2.490-1c.52.400 1.080.730 1.690.980l.38 2.650c.03.240.24.420.49.420h4c.25 0 .46-.18.490-.42l.38-2.650c.61-.25 1.170-.59 1.690-.98l2.490 1c.06.020.12.030.18.030.17 0 .34-.09.43-.25l2-3.460c.12-.22.070-.49-.12-.64l-2.110-1.650zm-1.980-1.710c.04.310.050.520.050.730 0 .21-.02.430-.05.730l-.14 1.130.89.700 1.080.84-.7 1.210-1.270-.51-1.040-.42-.9.680c-.43.320-.84.560-1.250.73l-1.060.43-.16 1.130-.2 1.350h-1.400l-.19-1.350-.16-1.130-1.060-.43c-.43-.18-.83-.41-1.230-.71l-.91-.7-1.060.43-1.270.51-.7-1.210 1.080-.84.890-.7-.14-1.130c-.03-.31-.05-.54-.05-.74s.02-.43.050-.73l.14-1.130-.89-.7-1.080-.84.7-1.210 1.270.51 1.040.42.900-.68c.43-.32.840-.56 1.250-.73l1.060-.43.160-1.130.2-1.350h1.390l.19 1.350.16 1.130 1.060.43c.43.180.83.410 1.230.71l.91.700 1.060-.43 1.270-.51.700 1.210-1.070.85-.89.700.14 1.130zM12 8c-2.210 0-4 1.790-4 4s1.790 4 4 4 4-1.790 4-4-1.790-4-4-4zm0 6c-1.100 0-2-.9-2-2s.9-2 2-2 2 .9 2 2-.9 2-2 2z"/></svg>
<svg style="left:1121.200px;top:-1.050px" width="24.700" height="24.700" viewBox="0 0 24 24"><path d="M14 5V9C7 10 4 15 3 20C5.500 16.500 9 14.900 14 14.900V19L21 12L14 5M16 9.830L18.170 12L16 14.170V12.900H14C11.930 12.900 10.070 13.280 8.340 13.850C9.740 12.460 11.540 11.370 14.280 11L16 10.730V9.830Z" fill="#e6e6e6"/></svg>
<div class="abs" style="left:1634px;top:0;width:2px;height:27px;background:#282828"></div>
<svg style="left:1658px;top:1px" width="20" height="20" viewBox="0 0 20 20" fill="none" stroke="#e6e6e6" stroke-width="2"><circle cx="7.400" cy="7.300" r="5.500"/><path d="M11.400 11.400L18.600 18.600"/></svg>
<svg style="left:1726px;top:2px" width="21" height="18" viewBox="0 0 21 18" fill="#e6e6e6"><circle cx="2.400" cy="2.600" r="1.400"/><circle cx="2.400" cy="8.700" r="1.400"/><circle cx="2.400" cy="14.700" r="1.400"/><rect x="5.600" y="1.600" width="14.200" height="2" rx="1"/><rect x="5.600" y="7.700" width="14.200" height="2" rx="1"/><rect x="5.600" y="13.700" width="14.200" height="2" rx="1"/></svg>
<svg style="left:1758px;top:0px" width="26" height="24" viewBox="0 0 26 24"><path d="M17.500 10.700A7.300 7.300 0 1 0 14.900 16.300" fill="none" stroke="#e6e6e6" stroke-width="2"/><path d="M14.800 10.900h7l-3.500 3.700z" fill="#e6e6e6"/><path d="M10.450 4.800c-.5 0-.9.4-.9.900v.3c-1.700.5-2.600 2-2.600 3.800v2.700l-1.100 1.100v.6h9.200v-.6l-1.100-1.100v-2.700c0-1.800-.9-3.300-2.600-3.800v-.3c0-.5-.4-.9-.9-.9zM9.300 15a1.150 1.150 0 0 0 2.300 0z" fill="#e6e6e6"/><circle cx="19" cy="18" r="4" fill="#f60a0a"/></svg>
<svg style="left:1795px;top:2px" width="18" height="18" viewBox="0 0 18 18"><rect width="18" height="18" rx="2" fill="#e2e2e2"/><circle cx="9" cy="6.300" r="3" fill="#555"/><path d="M2.800 14.800c0-2.600 4-3.700 6.200-3.700s6.200 1.100 6.200 3.700v.4H2.800z" fill="#555"/></svg>
</div>


<div class="lb" style="top:35px"></div>
<div class="lb" style="top:85px"></div>
<div class="lb sel" style="top:135px"></div>
<div class="lb" style="top:185px"></div>
<div class="lb" style="top:235px"></div>
<div class="lb" style="top:285px"></div>
<div class="lb" style="top:335px"></div>
<svg style="left:3px;top:35px" width="48" height="48" viewBox="0 0 48 48" fill="none" stroke="#e4e4e4" stroke-width="1.600" stroke-linecap="round" stroke-linejoin="round">
<rect x="8.300" y="9.200" width="12" height="5.600" rx="2.800" fill="#e4e4e4" stroke="none"/>
<path d="M18 12h3.500q2.200 0 2.200 2.200V36H28.500M23.700 15.800h4.800M23.700 25.900h4.800"/>
<rect x="31.300" y="13.600" width="8.900" height="4.400" rx="2.200" fill="#e4e4e4" stroke="none"/>
<rect x="31.300" y="23.700" width="8.900" height="4.400" rx="2.200" fill="#e4e4e4" stroke="none"/>
<rect x="31.300" y="33.800" width="8.900" height="4.400" rx="2.200" fill="#e4e4e4" stroke="none"/>
</svg>
<svg style="left:3px;top:85px" width="48" height="48" viewBox="0 0 48 48" fill="none" stroke="#e4e4e4" stroke-width="1.700" stroke-linecap="round" stroke-linejoin="round">
<path d="M10.200 14.300C18 14.300 19.500 18 22.800 23.100S27 31.900 33 31.900H39.500M10.200 31.900C18 31.900 19.500 28.200 22.800 23.100S27 14.300 33 14.300H39.500"/>
<path d="M31 9.300c3 2.500 5.500 4 8.800 5-3.300 1-5.800 2.500-8.800 5.500M31 26.500c3 2.500 5.500 4.300 8.800 5.300-3.300 1-5.800 2.500-8.800 5.500"/>
</svg>
<svg style="left:3px;top:135px" width="48" height="48" viewBox="0 0 48 48" fill="none" stroke="#e8e8e8" stroke-width="2.500" stroke-linecap="round" stroke-linejoin="round">
<path d="M30.500 14H16.500L27 23.200 16.500 32.300H30.500"/>
</svg>
<svg style="left:3px;top:185px" width="48" height="48" viewBox="0 0 48 48" fill="none" stroke="#e4e4e4" stroke-width="2.500" stroke-linecap="round" stroke-linejoin="round">
<path d="M26.500 13.800H12L22.800 22.800 12 32H26.500"/><path d="M29 24.300h8.600M33.300 20v8.600" stroke-width="1.500"/>
</svg>
<svg style="left:3px;top:235px" width="48" height="48" viewBox="0 0 48 48" fill="none" stroke="#e4e4e4" stroke-width="1.500" stroke-linecap="round" stroke-linejoin="round">
<path d="M11.500 10.300c8-1.200 16-1.200 25 .5-2 6-3 15-2.500 26H11.500z"/><path d="M24 36.500c1.500-2.300 4-2.800 10-2.500v2.800z" fill="#e4e4e4" stroke-width="0.800"/>
</svg>
<div class="t" style="left:18.9px;top:252.6px;font-size:10.5px;color:#e4e4e4;letter-spacing:1.06px;">2D</div>
<svg style="left:3px;top:285px" width="48" height="48" viewBox="0 0 48 48" fill="none" stroke="#e4e4e4" stroke-width="1.700" stroke-linecap="round" stroke-linejoin="round">
<path d="M12.500 16c3-3 5.500-5 8-4.500 2 .4 3.500 4 5.500 6.500 3-3 7-6.500 10.500-9M12.500 24.500c2.500-2.500 4.500-3 6-1.500 1.500 1.500 2.500 5 4.500 5.500 2 .5 6-4.500 12-4.500M12.700 36.300h23" />
</svg>
<svg style="left:3px;top:335px" width="48" height="48" viewBox="0 0 48 48" fill="none" stroke="#e4e4e4" stroke-width="1.500" stroke-linecap="round" stroke-linejoin="round">
<circle cx="24.300" cy="22.200" r="13.300" stroke-width="1.700"/><path d="M9.500 38.700h29.200" stroke-width="2" stroke-linecap="butt"/><path d="M22.200 35.500v3h4v-3" stroke-width="1.300"/>
<path d="M25.300 12.500l-4.500 13a2.300 2.300 0 0 0 4.400 1z" fill="#e4e4e4" stroke-width="0.500"/>
<path d="M15.700 18.500a10.300 10.300 0 0 1 17.400 0" stroke-dasharray="0.800 2.100" stroke-width="1.300"/>
</svg>
<div class="abs" style="left:14px;top:755px;width:24px;height:24px;border-radius:12px;background:#555"></div>
<div class="t" style="left:21.4px;top:758.0px;font-size:16.5px;color:#fff;font-weight:bold;">?</div>
<div class="abs" style="left:0;top:792.500px;width:1817px;height:1.500px;background:#4b4743"></div>


<div id="panel" class="abs"></div>
<svg style="left:69px;top:55px" width="18" height="16" viewBox="0 0 18 16" fill="#fff"><rect x="1" y="1" width="13" height="2"/><rect x="1" y="5.200" width="13" height="2"/><rect x="1" y="9.300" width="9" height="2.100"/><path d="M11.800 9v6.300l4.800-3.150z"/></svg>
<svg style="left:121px;top:56px" width="10" height="13" viewBox="0 0 10 13" fill="none" stroke="#a8a8a8" stroke-width="2"><path d="M8.200 1L2 6.700l6.200 5.700"/></svg>
<div class="t" style="left:169.6px;top:55.8px;font-size:14.2px;color:#f0f0f0;letter-spacing:1.25px;">Классификатор</div>
<div class="abs" style="left:152px;top:78.700px;width:153px;height:2.300px;background:#eee"></div>
<div class="abs" style="left:322px;top:50px;width:69.300px;height:24px;overflow:hidden"><div class="t" style="left:0.3px;top:5.8px;font-size:14.2px;color:#f0f0f0;letter-spacing:1.26px;">Нераспределенные</div></div>
<svg style="left:412px;top:56px" width="10" height="13" viewBox="0 0 10 13" fill="none" stroke="#fff" stroke-width="2"><path d="M1.800 1L8 6.700l-6.200 5.700"/></svg>
<svg style="left:449px;top:55px" width="16" height="16" viewBox="0 0 16 16" fill="none" stroke="#fff" stroke-width="2"><path d="M1.500 1.800l13 12.700M14.500 1.800l-13 12.700"/></svg>
<div id="sect" class="abs"></div>
<div class="t" style="left:73.9px;top:96.3px;font-size:13.6px;color:#f4f4f4;font-weight:bold;letter-spacing:-0.21px;">Классификатор</div>
<svg style="left:454px;top:101px" width="10" height="5" viewBox="0 0 10 5"><path d="M0 0h10L5 5z" fill="#d0d0d0"/></svg>
<div id="pbody" class="abs"></div>
<div class="box" style="left:72px;top:130px;width:192px;height:40px"></div>
<div class="abs" style="left:84px;top:129px;width:161px;height:3px;background:#fff"></div>
<div class="t" style="left:88.7px;top:123.5px;font-size:12.3px;color:#6e6e6e;letter-spacing:0.58px;">Выбрать классификатор</div>
<div class="t" style="left:88.7px;top:140.9px;font-size:16.3px;color:#222;letter-spacing:-0.72px;">Собственн…</div>
<svg style="left:234.400px;top:148px" width="10" height="5" viewBox="0 0 10 5"><path d="M0 0h10L5 5z" fill="#7bb3c9"/></svg>
<div class="box" style="left:272px;top:130px;width:191px;height:40px"></div>
<div class="t" style="left:288.7px;top:142.7px;font-size:13.3px;color:#757575;letter-spacing:0.27px;">Поиск по названию/коду</div>
<svg style="left:68px;top:184px" width="9" height="13" viewBox="0 0 9 13" fill="none" stroke="#3a9cc0" stroke-width="1.300"><path d="M1.200 4.200L4.300 1.300l3.100 2.900M1.200 8.500l3.100 2.900 3.100-2.900"/></svg>
<div class="t" style="left:89.6px;top:185.0px;font-size:10px;color:#3a92b4;letter-spacing:0.83px;-webkit-text-stroke:0.200px #3a92b4;">Свернуть дерево</div>
<svg style="left:395.800px;top:184px" width="11" height="12" viewBox="0 0 11 12"><path d="M0 0h11L6.700 5.500v6.200L4.300 10V5.500z" fill="#3a92b4"/></svg>
<div class="t" style="left:414.7px;top:185.3px;font-size:10px;color:#3a92b4;letter-spacing:1.67px;-webkit-text-stroke:0.200px #3a92b4;">Фильтры</div>
<div class="abs" style="left:64px;top:304px;width:407px;height:23.600px;background:#c4c4c4"></div>
<svg style="left:68.6px;top:218.9px" width="7.200" height="3.600" viewBox="0 0 8 4"><path d="M0 0h8L4 4z" fill="#111"/></svg><div class="t" style="left:86.2px;top:213.5px;font-size:12.3px;color:#1a1a1a;font-weight:bold;letter-spacing:-0.31px;">001 - Раздел 01</div>
<svg style="left:76.7px;top:242.9px" width="7.200" height="3.600" viewBox="0 0 8 4"><path d="M0 0h8L4 4z" fill="#111"/></svg><div class="t" style="left:94.3px;top:237.5px;font-size:12.3px;color:#1a1a1a;font-weight:bold;letter-spacing:-0.40px;">01 - Раздел 1</div>
<svg style="left:84.6px;top:266.9px" width="7.200" height="3.600" viewBox="0 0 8 4"><path d="M0 0h8L4 4z" fill="#111"/></svg><div class="t" style="left:102.2px;top:261.5px;font-size:12.3px;color:#1a1a1a;font-weight:bold;letter-spacing:-0.30px;">01-1 - Подраздел 1.1</div>
<svg style="left:92.8px;top:290.9px" width="7.200" height="3.600" viewBox="0 0 8 4"><path d="M0 0h8L4 4z" fill="#111"/></svg><div class="t" style="left:110.4px;top:285.5px;font-size:12.3px;color:#1a1a1a;font-weight:bold;letter-spacing:-0.20px;">01-1-1 - Новый класс 01-1-1</div>
<div class="t" style="left:118.2px;top:309.5px;font-size:12.3px;color:#1a1a1a;letter-spacing:-0.13px;">Новое правило</div>
<div class="t" style="left:110.4px;top:333.5px;font-size:12.3px;color:#1a1a1a;letter-spacing:-0.41px;">01-1-2 - Работы - 1</div>
<svg style="left:76.7px;top:362.9px" width="7.200" height="3.600" viewBox="0 0 8 4"><path d="M0 0h8L4 4z" fill="#111"/></svg><div class="t" style="left:94.3px;top:357.5px;font-size:12.3px;color:#1a1a1a;letter-spacing:-0.25px;">02 - Раздел 2</div>
<div class="t" style="left:102.2px;top:381.5px;font-size:12.3px;color:#1a1a1a;letter-spacing:-0.37px;">02-1 - Материалы - 1</div>
<div class="t" style="left:102.2px;top:405.5px;font-size:12.3px;color:#1a1a1a;letter-spacing:-0.36px;">02-2 - Машины - 1</div>

<div class="abs" style="left:479.500px;top:467px;width:1.500px;height:27px;background:#3d89a8"></div>


<svg style="left:0;top:0" width="1817" height="794" viewBox="0 0 1817 794">
<rect x="1784" y="35" width="33" height="759" fill="#555"/>
<rect x="1784" y="74.5" width="33" height="1.500" fill="#3b3b3b"/><rect x="1784" y="167.9" width="33" height="1.500" fill="#3b3b3b"/><rect x="1784" y="481.3" width="33" height="1.500" fill="#3b3b3b"/><rect x="1784" y="530" width="33" height="1.500" fill="#3b3b3b"/><rect x="1784" y="711" width="33" height="1.500" fill="#3b3b3b"/>
<!-- 1 focus -->
<path d="M1793.5 51.1V46.5H1798.1M1806.2 46.5H1810.8V51.1M1810.8 58.699999999999996V63.3H1806.2M1798.1 63.3H1793.5V58.699999999999996" fill="none" stroke="#e2e2e2" stroke-width="1.100"/><polygon points="1802.2,49.8 1806.7,52.4 1806.7,57.6 1802.2,60.2 1797.7,57.6 1797.7,52.4" fill="#e2e2e2"/>
<!-- 2 tree -->
<g fill="none" stroke="#e2e2e2" stroke-width="1.300" stroke-linecap="round" stroke-linejoin="round">
<path d="M1798 105.500h-1.800a5.300 5.300 0 0 1-.8-10.500 5.600 5.600 0 0 1 3.300-4.300 5.800 5.800 0 0 1 8.600 1.200 5.300 5.300 0 0 1 4.300 4.100 4.600 4.600 0 0 1-1.800 9.100H1806.500"/>
<path d="M1802.300 95v16.800M1802.300 104l-4.300-3.500M1802.300 105.500l3.700-3M1802.300 99.500l2.200-2"/>
</g>
<!-- 3 screens -->
<path d="M1797.800 149.200H1789.700V131.700H1812.800V139.500M1794.500 149.200v2.400h3.300" fill="none" stroke="#e2e2e2" stroke-width="1.100"/>
<path d="M1799.5 145.29999999999998V140.7H1804.1M1809.7 140.7H1814.3V145.29999999999998M1814.3 151.4V156H1809.7M1804.1 156H1799.5V151.4" fill="none" stroke="#e2e2e2" stroke-width="1.100"/><polygon points="1806.9,144.2 1811.1,146.6 1811.1,151.4 1806.9,153.8 1802.7,151.4 1802.7,146.6" fill="#e2e2e2"/>
<!-- 4 ruler -->
<rect x="1792.600" y="189.500" width="19" height="6" fill="none" stroke="#e2e2e2" stroke-width="1.100"/>
<path d="M1795.500 195.500v-3M1798.700 195.500v-2.200M1801.900 195.500v-3M1805.100 195.500v-2.200M1808.300 195.500v-3" stroke="#e2e2e2" stroke-width="1.300"/>
<path d="M1792 197.700h20" stroke="#e2e2e2" stroke-width="1"/>
<path d="M1788 203v4h4z" fill="#f0f0f0"/>
<!-- 5 section plane -->
<path d="M1789.500 239.400L1797.200 233.500H1814.500L1807 239.400z" fill="none" stroke="#e2e2e2" stroke-width="1.100"/>
<path d="M1797.200 230.800L1806.800 223.200V243L1797.200 250.600z" fill="#e2e2e2"/>
<!-- 6 box section -->
<g fill="none" stroke="#e2e2e2" stroke-width="1.100" stroke-linejoin="round">
<rect x="1790.500" y="275.800" width="15.800" height="15.800"/><path d="M1790.500 275.800L1798 270.500H1813.800V286.300L1806.300 291.600M1806.300 275.800L1813.800 270.500M1790.500 291.600L1798 286.300H1813.800M1798 286.300V270.500"/>
<path d="M1799.700 275.800L1804.200 272.300V288L1799.700 291.600z" fill="#e2e2e2"/>
</g>
<!-- 7 sheet -->
<g fill="none" stroke="#e2e2e2" stroke-width="1.200">
<path d="M1792.500 314.600H1813.700V333.300H1788.600V318.500z"/><path d="M1788.600 318.800h4.200v-4.200" stroke-width="1"/>
<path d="M1790 335h25.300v-19" stroke-width="1.800"/>
<path d="M1789 323.300h25M1800.500 315v18" stroke-dasharray="2.200 1.300" stroke-width="1"/>
<rect x="1807" y="330" width="6.500" height="3"/>
</g>
<!-- 8 target -->
<circle cx="1802" cy="369" r="8.100" fill="none" stroke="#e2e2e2" stroke-width="2"/><circle cx="1802" cy="369" r="4" fill="#e2e2e2"/>
<path d="M1802 358v3M1802 377v3M1791 369h3M1810 369h3" stroke="#e2e2e2" stroke-width="2"/>
<!-- 9 flag -->
<circle cx="1802" cy="413" r="12.600" fill="none" stroke="#e2e2e2" stroke-width="0.900"/>
<path d="M1796.200 420V406.500c2.500-1 4.500-1 6.500 0s4.500 1 7.200 0V414c-2.700 1-5 1-7.200 0s-4-1-6.500 0" fill="none" stroke="#e2e2e2" stroke-width="0.900"/>
<!-- 10 S select -->
<path d="M1803.400 446.700H1812.600V467H1791.500V458.300H1803.400z" fill="none" stroke="#e2e2e2" stroke-width="0.900" stroke-dasharray="1 1"/>
<g fill="#e2e2e2"><rect x="1802.100" y="445.400" width="2.600" height="2.600"/><rect x="1811.300" y="445.400" width="2.600" height="2.600"/><rect x="1811.300" y="465.700" width="2.600" height="2.600"/><rect x="1790.200" y="465.700" width="2.600" height="2.600"/><rect x="1790.200" y="457" width="2.600" height="2.600"/><rect x="1802.100" y="457" width="2.600" height="2.600"/></g>
<text x="1790.300" y="453.700" font-family="Liberation Sans, sans-serif" font-weight="bold" font-size="12.500" fill="#e2e2e2" transform="translate(1790.300 0) scale(1.150 1) translate(-1790.300 0)">S</text>
<!-- 11 axes grid -->
<path d="M1789 509.600L1816 494.500M1789 518.400L1815.400 503.300M1797.800 498.900L1815.400 508.300M1790.200 504.600L1807.200 514" fill="none" stroke="#e2e2e2" stroke-width="0.900"/>
<text x="1789" y="503" font-family="Liberation Sans, sans-serif" font-size="5.500" fill="#e2e2e2">1</text>
<text x="1797.800" y="496.500" font-family="Liberation Sans, sans-serif" font-size="5.500" fill="#e2e2e2">2</text>
<!-- 12 box -->
<rect x="1790.500" y="543.2" width="23.400" height="23.400" fill="none" stroke="#f0f0f0" stroke-width="1" stroke-dasharray="1.700 1.225"/>
<g fill="none" stroke="#e2e2e2" stroke-width="1" stroke-linejoin="round"><path d="M1802 548.200L1807.700 551.500V558.300L1802 561.600 1796.300 558.300V551.500z"/><path d="M1796.300 551.500L1802 554.800 1807.700 551.500M1802 554.800V561.600"/></g>
<!-- 13 eye -->
<rect x="1790.500" y="587" width="23.400" height="23.400" fill="none" stroke="#f0f0f0" stroke-width="1" stroke-dasharray="1.700 1.225"/>
<path d="M1794.800 599c2-3.500 4.700-5.200 7.600-5.200s5.600 1.700 7.600 5.200c-2 3.500-4.700 5.200-7.600 5.200s-5.600-1.700-7.600-5.200z" fill="#e2e2e2"/><circle cx="1802.400" cy="599" r="2.700" fill="#555"/><circle cx="1802.400" cy="599" r="1.500" fill="#e2e2e2"/>
<!-- 14 eye off -->
<rect x="1790.500" y="631" width="23.400" height="23.400" fill="none" stroke="#f0f0f0" stroke-width="1" stroke-dasharray="1.700 1.225"/>
<path d="M1794.300 643.500c2-3.500 4.700-5.200 7.600-5.200s5.600 1.700 7.600 5.200c-2 3.500-4.700 5.200-7.600 5.200s-5.600-1.700-7.600-5.200z" fill="#e2e2e2"/><circle cx="1801.900" cy="643.500" r="2.700" fill="#555"/><circle cx="1801.900" cy="643.500" r="1.300" fill="#e2e2e2"/>
<path d="M1795 637.300L1808 650" stroke="#555" stroke-width="2.400"/><path d="M1794.700 636.800L1808.300 650" stroke="#e2e2e2" stroke-width="0.900"/>
<!-- 15 clear -->
<rect x="1790.500" y="675.1" width="23.400" height="23.400" fill="none" stroke="#f0f0f0" stroke-width="1" stroke-dasharray="1.700 1.225"/>
<rect x="1800" y="685" width="16" height="16" fill="#e0e0e0"/><path d="M1803.500 688.500l9 9M1812.500 688.500l-9 9" stroke="#444" stroke-width="1.300"/>
<!-- 16 cube -->
<rect x="1786" y="720.100" width="31" height="31.800" fill="#8c8c8c"/>
<path d="M1792 728.500L1800 725.800 1812 728 1811 740 1802 747 1793.500 741.500z" fill="#e4e4e4"/><path d="M1802.200 731.800L1811 729 1810.200 739.500 1802.200 745.500z" fill="#8c8c8c"/><path d="M1795.500 728.300L1800.300 726.900 1808.500 728.300 1802.500 730z" fill="#8c8c8c"/>
<!-- 17 orbit -->
<rect x="1786" y="764.200" width="31" height="30" fill="#8c8c8c"/>
<g fill="none" stroke="#e2e2e2" stroke-width="1.800"><ellipse cx="1802.100" cy="780" rx="10.800" ry="5.400"/><ellipse cx="1802.100" cy="780" rx="4.600" ry="10"/></g>
<path d="M1802.100 779.500v-3M1802.100 779.500l-2.800 3M1802.100 779.500l2.800 3" stroke="#e2e2e2" stroke-width="0.700"/>
</svg>


<div class="abs" style="left:560.700px;top:90.700px;width:598.500px;height:598.500px;background:#fff;box-shadow:0 4px 14px rgba(0,0,0,.36),0 8px 26px rgba(0,0,0,.2)"></div>
<div class="abs" style="left:560.700px;top:90.700px;width:599.300px;height:31.800px;background:#333;border:1px solid #444;border-bottom:none"></div>
<div class="t" style="left:569.5px;top:98.9px;font-size:15.8px;color:#fff;letter-spacing:0.11px;">Выбор условия отбора</div>
<svg style="left:1138.5px;top:100.7px" width="12.4" height="11.3" viewBox="0 0 12.4 11.3" fill="none" stroke="#fff" stroke-width="1.4"><path d="M0.500 0.500L11.9 10.8M11.9 0.500L0.500 10.8"/></svg>
<div class="t" style="left:571.7px;top:142.0px;font-size:14.2px;color:#3a92b4;letter-spacing:0.93px;">&lt; Назад</div>
<div class="t" style="left:569.5px;top:168.5px;font-size:12.3px;color:#222;letter-spacing:-0.22px;">Единица измерения - 1 шт</div>
<svg style="left:720px;top:169px" width="10" height="10" viewBox="0 0 24 24" fill="none" stroke="#333" stroke-width="2.600"><circle cx="12" cy="12" r="4"/><circle cx="12" cy="12" r="8.500" stroke-dasharray="4.450 2.200" stroke-width="4"/></svg>
<div class="abs" style="left:577.300px;top:207.200px;width:17.600px;height:17.700px;background:#c4c4c4;border-radius:2px"></div>
<svg style="left:577.300px;top:207.200px" width="17.600" height="17.700" viewBox="0 0 17.600 17.700" stroke="#fff" stroke-width="2.100"><path d="M3.400 8.850h10.800M8.800 3.450v10.800"/></svg>
<div class="t" style="left:607.3px;top:209.5px;font-size:14.2px;color:#3a92b4;">Добавить условие</div>
<div class="abs" style="left:577.300px;top:235px;width:565px;height:1px;background:#bdbdbd"></div>
<div class="btn" style="left:1037.200px;top:625px;width:113.700px;height:36px"></div>
<div class="t" style="left:1053.9px;top:634.8px;font-size:14.3px;color:#fff;letter-spacing:1.14px;-webkit-text-stroke:0.450px #fff;">Сохранить</div>


<div class="abs" style="left:611.200px;top:175.900px;width:599.500px;height:435.700px;background:#fff;border:1px solid #3c3c3c;box-shadow:0 4px 14px rgba(0,0,0,.36),0 8px 26px rgba(0,0,0,.2)"></div>
<div class="abs" style="left:611.200px;top:175.900px;width:599.500px;height:32.900px;background:#333;border:1px solid #444;border-bottom:none"></div>
<div class="t" style="left:620.4px;top:184.9px;font-size:15.8px;color:#fff;letter-spacing:0.11px;">Выбор условия отбора</div>
<svg style="left:1189.3px;top:187px" width="12.4" height="11.3" viewBox="0 0 12.4 11.3" fill="none" stroke="#fff" stroke-width="1.4"><path d="M0.500 0.500L11.9 10.8M11.9 0.500L0.500 10.8"/></svg>
<div class="abs" style="left:612.200px;top:208.800px;width:597.500px;height:36.500px;background:#676767"></div>
<div class="t" style="left:620.4px;top:220.3px;font-size:14.2px;color:#ececec;letter-spacing:-0.10px;">Выбор параметра</div>
<div class="t" style="left:771.3px;top:220.3px;font-size:14.2px;color:#ececec;letter-spacing:0.05px;">Выбор класса/атрибута</div>
<div class="abs" style="left:762px;top:245.300px;width:1.200px;height:313.800px;background:#5a5a5a"></div>
<div class="t" style="left:628.3px;top:256.6px;font-size:12.3px;color:#3a92b4;letter-spacing:-0.22px;">Атрибут</div>
<div class="t" style="left:628.3px;top:274.6px;font-size:12.3px;color:#222;letter-spacing:-0.09px;">Геометрия</div>
<div class="t" style="left:628.3px;top:292.6px;font-size:12.3px;color:#222;letter-spacing:0.04px;">Константа</div>
<div class="box" style="left:771px;top:254.400px;width:393.700px;height:39.300px;border-color:#858585"></div>
<div class="abs" style="left:783.300px;top:253.400px;width:46.600px;height:3px;background:#fff"></div>
<div class="t" style="left:787.7px;top:247.5px;font-size:12.3px;color:#6e6e6e;letter-spacing:0.83px;">Поиск</div>
<div class="t" style="left:787.7px;top:264.9px;font-size:16.3px;color:#222;letter-spacing:-0.05px;">Семейство</div>
<svg style="left:1177px;top:263px" width="20" height="21" viewBox="0 0 20 21" fill="none" stroke="#333" stroke-width="1.700" stroke-linejoin="miter"><path d="M10 2.500L18 8.700 10 14.900 2 8.700z"/><path d="M2 12.800L10 19 18 12.800"/></svg>
<div class="t" style="left:800.5px;top:300.7px;font-size:12.3px;color:#222;letter-spacing:-0.04px;">Базовые</div>
<div class="t" style="left:910.8px;top:300.7px;font-size:12.3px;color:#3a92b4;letter-spacing:-0.40px;">Наборы</div>
<div class="t" style="left:995.4px;top:300.7px;font-size:12.3px;color:#222;letter-spacing:-0.07px;">Универсальные</div>
<div class="t" style="left:1123.4px;top:300.7px;font-size:12.3px;color:#222;letter-spacing:-0.29px;">Вручную</div>
<div class="abs" style="left:763px;top:323px;width:430px;height:236px;overflow:hidden">
<div class="t" style="left:45.4px;top:-3.4px;font-size:12.3px;color:#222;letter-spacing:-0.15px;">1. Семейство и типоразмер</div>
<svg style="left:23.1px;top:20.1px" width="6" height="3" viewBox="0 0 8 4"><path d="M0 0h8L4 4z" fill="#222"/></svg><div class="t" style="left:36.3px;top:14.5px;font-size:12.3px;color:#222;letter-spacing:-0.42px;">IFC_1.0_Оборудование</div>
<div class="t" style="left:44.5px;top:32.5px;font-size:12.3px;color:#222;letter-spacing:-0.11px;">Семейство и типоразмер</div>
<svg style="left:23.1px;top:56.1px" width="6" height="3" viewBox="0 0 8 4"><path d="M0 0h8L4 4z" fill="#222"/></svg><div class="t" style="left:36.3px;top:50.5px;font-size:12.3px;color:#222;letter-spacing:-0.15px;">IFC_1_Идентификация Несколько категорий</div>
<div class="t" style="left:44.9px;top:68.5px;font-size:12.3px;color:#222;letter-spacing:-0.13px;">1. Семейство и типоразмер</div>
<svg style="left:23.1px;top:92.1px" width="6" height="3" viewBox="0 0 8 4"><path d="M0 0h8L4 4z" fill="#222"/></svg><div class="t" style="left:36.3px;top:86.5px;font-size:12.3px;color:#222;letter-spacing:-0.18px;">IFC_1_Идентификация_Несколько категорий</div>
<div class="t" style="left:44.9px;top:104.5px;font-size:12.3px;color:#222;letter-spacing:-0.13px;">1. Семейство и типоразмер</div>
<svg style="left:23.1px;top:128.1px" width="6" height="3" viewBox="0 0 8 4"><path d="M0 0h8L4 4z" fill="#222"/></svg><div class="t" style="left:36.3px;top:122.5px;font-size:12.3px;color:#222;letter-spacing:-0.29px;">IFC_1_Идентификация_Ограждения</div>
<div class="t" style="left:44.5px;top:140.5px;font-size:12.3px;color:#222;letter-spacing:-0.21px;">Семейство</div>
<svg style="left:23.1px;top:164.1px" width="6" height="3" viewBox="0 0 8 4"><path d="M0 0h8L4 4z" fill="#222"/></svg><div class="t" style="left:36.3px;top:158.5px;font-size:12.3px;color:#222;letter-spacing:-0.27px;">IFC_1_Идентификация_Перекрытия</div>
<div class="t" style="left:45.2px;top:176.5px;font-size:12.3px;color:#222;letter-spacing:-0.30px;">1. Семейство</div>
<svg style="left:23.1px;top:200.1px" width="6" height="3" viewBox="0 0 8 4"><path d="M0 0h8L4 4z" fill="#222"/></svg><div class="t" style="left:36.3px;top:194.5px;font-size:12.3px;color:#222;letter-spacing:-0.39px;">IFC_1_Идентификация_Стены</div>
<div class="t" style="left:45.2px;top:212.5px;font-size:12.3px;color:#3a92b4;letter-spacing:-0.30px;">1. Семейство</div>
</div>
<div class="abs" style="left:1195.200px;top:324.300px;width:5.700px;height:226.400px;background:#3a95b7"></div>
<div class="abs" style="left:1195.200px;top:324.300px;width:5.700px;height:22.400px;background:#6c6c6c"></div>
<div class="abs" style="left:612.200px;top:559.100px;width:597.500px;height:51.500px;background:#757575"></div>
<div class="btn" style="left:1087.900px;top:567.100px;width:114.200px;height:35.600px"></div>
<div class="t" style="left:1105.2px;top:578.0px;font-size:14.3px;color:#fff;letter-spacing:1.08px;-webkit-text-stroke:0.450px #fff;">Сохранить</div>

</div>
</body>
</html>
